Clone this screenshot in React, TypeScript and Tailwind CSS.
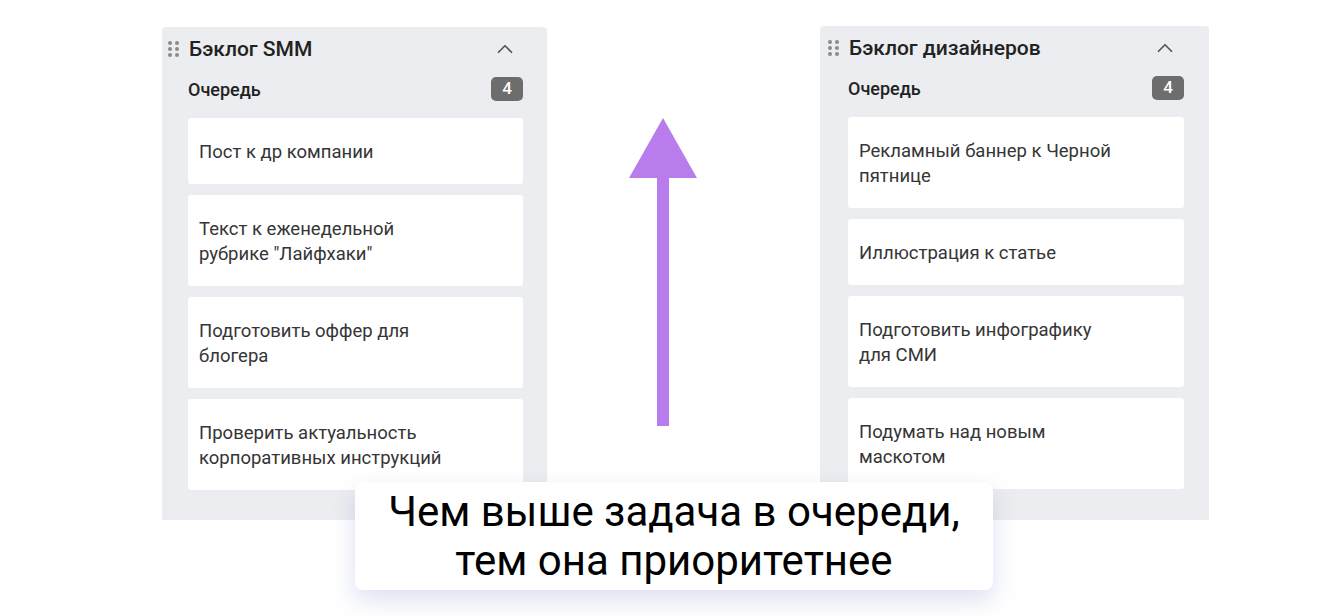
import { ChevronUp } from "lucide-react";

type Column = {
  title: string;
  tasks: string[];
};

const columns: Column[] = [
  {
    title: "Бэклог SMM",
    tasks: [
      "Пост к др компании",
      "Текст к еженедельной рубрике \"Лайфхаки\"",
      "Подготовить оффер для блогера",
      "Проверить актуальность корпоративных инструкций",
    ],
  },
  {
    title: "Бэклог дизайнеров",
    tasks: [
      "Рекламный баннер к Черной пятнице",
      "Иллюстрация к статье",
      "Подготовить инфографику для СМИ",
      "Подумать над новым маскотом",
    ],
  },
];

function Grip() {
  return (
    <svg width="11" height="16" viewBox="0 0 11 16" className="shrink-0">
      {[2, 8, 14].map((cy) =>
        [2, 9].map((cx) => (
          <circle key={`${cx}-${cy}`} cx={cx} cy={cy} r="2" fill="#8a8a8a" />
        ))
      )}
    </svg>
  );
}

function BacklogColumn({
  col,
  className,
  headPad,
  bodyPad,
}: {
  col: Column;
  className: string;
  headPad: string;
  bodyPad: string;
}) {
  return (
    <div className={`bg-[#ecedf0] rounded-t-[4px] overflow-hidden ${className}`}>
      {/* шапка */}
      <div className={`flex items-center h-[28px] mt-[8px] ${headPad}`}>
        <Grip />
        <h2 className="ml-[10px] text-[21px] leading-[28px] font-medium text-[#222]">
          {col.title}
        </h2>
        <ChevronUp className="ml-auto text-[#555]" size={26} strokeWidth={1.6} />
      </div>

      <div className={`flex items-center justify-between h-6 mt-[14px] ${bodyPad}`}>
        <span className="text-[18px] font-medium text-[#222]">Очередь</span>
        <span className="w-8 h-6 rounded-[5px] bg-[#6d6d6d] text-white text-[17px] font-medium flex items-center justify-center">
          4
        </span>
      </div>

      <div className={`flex flex-col gap-[11px] mt-[17px] ${bodyPad}`}>
        {col.tasks.map((t) => (
          <div key={t} className="bg-white rounded-[3px] pl-[11px] pt-[22px] pb-[19px]">
            <p className="max-w-[258px] text-[18.5px] leading-[25px] text-[#353535]">{t}</p>
          </div>
        ))}
      </div>
    </div>
  );
}

export default function App() {
  return (
    <div
      className="relative w-[1340px] h-[616px] bg-white overflow-hidden"
      style={{ fontFamily: "Roboto, 'Noto Sans', sans-serif" }}
    >
      <div className="flex items-start pl-[162px] pt-[26px]">
        <BacklogColumn
          col={columns[0]}
          className="w-[385px] mt-[1px] h-[493px]"
          headPad="pl-[6px] pr-[29px]"
          bodyPad="pl-[26px] pr-[24px]"
        />

        {/* стрелка приоритета */}
        <div className="w-[273px] pl-[82px] pt-[92px]">
          <svg width="68" height="308" viewBox="0 0 68 308">
            <polygon points="34,0 0,60 68,60" fill="#b97ced" />
            <rect x="28" y="59" width="12" height="249" fill="#b97ced" />
          </svg>
        </div>

        <BacklogColumn
          col={columns[1]}
          className="w-[389px] h-[494px]"
          headPad="pl-[8px] pr-[31px]"
          bodyPad="pl-[28px] pr-[25px]"
        />
      </div>

      <div className="absolute left-[355px] top-[482px] w-[638px] h-[108px] bg-white rounded-lg shadow-[0_10px_24px_rgba(130,145,200,0.28)] flex items-center justify-center">
        <p className="text-center text-[42px] leading-[49px] text-black">
          Чем выше задача в очереди,
          <br />
          тем она приоритетнее
        </p>
      </div>
    </div>
  );
}
